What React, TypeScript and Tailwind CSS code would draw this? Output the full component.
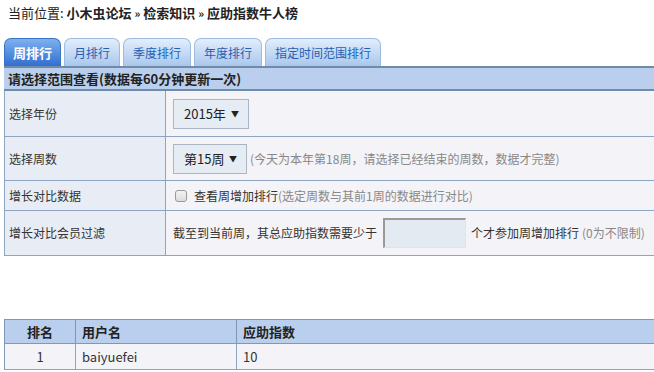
import { ReactNode } from 'react';

const tabs = ['周排行', '月排行', '季度排行', '年度排行', '指定时间范围排行'];

function Row({ label, h, children }: { label: string; h: string; children: ReactNode }) {
  return (
    <div className={`grid grid-cols-[161px_1fr] border-b border-[#8ea5c2] ${h}`}>
      <div className="flex items-center pl-[4px] bg-[#e8edf5] border-r border-[#8ea5c2]">{label}</div>
      <div className="flex items-center pl-[7px] bg-[#f4f3f8]">{children}</div>
    </div>
  );
}

function Select({ value, w }: { value: string; w: string }) {
  return (
    <div className={`flex items-center justify-between h-[30px] ${w} pl-[10px] pr-[9px] bg-[#e6ecf4] border border-[#aab6c6] text-[13px] text-[#222]`}>
      <span>{value}</span>
      <span className="text-[8px]">▼</span>
    </div>
  );
}

export default function App() {
  return (
    <div className="w-[654px] h-[372px] overflow-hidden bg-white text-[12px] text-[#333] font-['Noto_Sans_CJK_SC','Microsoft_YaHei',sans-serif] leading-none">
      <div className="h-[29px] pl-[8px] pt-[6px] text-[13px] text-[#222]">
        当前位置: <b>小木虫论坛</b> <b className="text-[11px]">»</b> <b>检索知识</b>{' '}
        <b className="text-[11px]">»</b> <b>应助指数牛人榜</b>
      </div>

      <div className="flex items-end gap-[3px] pl-[4px] h-[37px]">
        {tabs.map((t, i) => (
          <div
            key={t}
            className={
              i === 0
                ? 'h-[28px] px-[8px] flex items-center rounded-t-[7px] border border-b-0 border-[#3a74c4] bg-gradient-to-b from-[#7fb0ee] to-[#2f6fd0] text-white font-bold text-[13px]'
                : 'h-[28px] px-[9px] flex items-center rounded-t-[7px] border border-b-0 border-[#9dbbe0] bg-gradient-to-b from-[#e3eefb] to-[#a9c7ec] text-[#1f5fb5] text-[12px]'
            }
          >
            {t}
          </div>
        ))}
      </div>

      <div className="ml-[4px] w-[660px]">
        <div className="h-[25px] flex items-center pl-[4px] bg-[#b9cfed] border-y-2 border-[#6f8ba8] font-bold text-[13px] text-[#222]">
          请选择范围查看(数据每60分钟更新一次)
        </div>
        <div className="border-l border-[#8ea5c2]">
          <Row label="选择年份" h="h-[46px]">
            <Select value="2015年" w="w-[76px]" />
          </Row>
          <Row label="选择周数" h="h-[44px]">
            <Select value="第15周" w="w-[74px]" />
            <span className="ml-[3px] text-[#888]">(今天为本年第18周，请选择已经结束的周数，数据才完整)</span>
          </Row>
          <Row label="增长对比数据" h="h-[30px]">
            <span className="ml-[2px] w-[12px] h-[12px] rounded-[3px] border border-[#9a9a9a] bg-gradient-to-b from-[#f4f4f4] to-[#dcdcdc]" />
            <span className="ml-[7px] text-[#333]">查看周增加排行</span>
            <span className="text-[#888]">(选定周数与其前1周的数据进行对比)</span>
          </Row>
          <Row label="增长对比会员过滤" h="h-[45px]">
            <span>截至到当前周，其总应助指数需要少于</span>
            <span className="ml-[6px] w-[83px] h-[30px] bg-[#e3eaf2] border-t-2 border-l-2 border-[#9a9a9a] border-r border-b border-r-[#dfe4ea] border-b-[#dfe4ea]" />
            <span className="ml-[5px]">个才参加周增加排行</span>
            <span className="ml-[3px] text-[#888]">(0为不限制)</span>
          </Row>
        </div>
      </div>

      <div className="mt-[63px] ml-[4px] w-[660px] border-l border-t border-[#7f98b5]">
        <div className="grid grid-cols-[71px_161px_1fr] h-[24px] bg-[#b9cfed] font-bold text-[13px] text-[#222] border-b border-[#7f98b5]">
          <div className="flex items-center justify-center border-r border-[#7f98b5]">排名</div>
          <div className="flex items-center pl-[6px] border-r border-[#7f98b5]">用户名</div>
          <div className="flex items-center pl-[6px]">应助指数</div>
        </div>
        <div className="grid grid-cols-[71px_161px_1fr] h-[26px] bg-[#f4f3f8] text-[13px] text-[#333] border-b border-[#8ea5c2]">
          <div className="flex items-center justify-center border-r border-[#8ea5c2]">1</div>
          <div className="flex items-center pl-[6px] border-r border-[#8ea5c2]">baiyuefei</div>
          <div className="flex items-center pl-[6px]">10</div>
        </div>
      </div>
    </div>
  );
}
